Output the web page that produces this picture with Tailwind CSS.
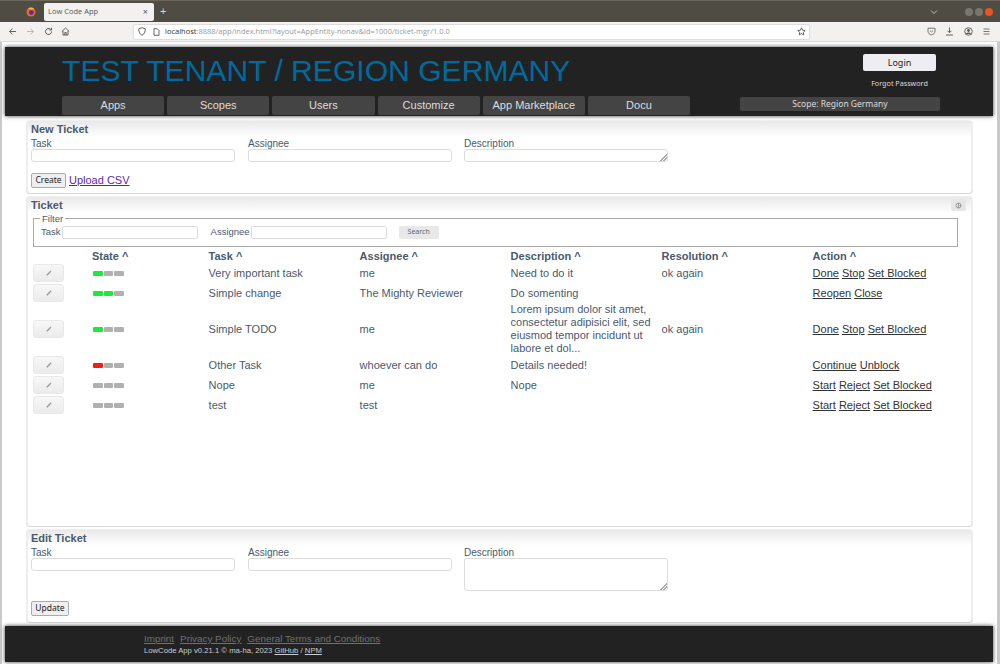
<!DOCTYPE html>
<html lang="en">
<head>
  <title>Low Code App</title>
  <meta charset="UTF-8" />
  <script src="https://cdn.jsdelivr.net/npm/@tailwindcss/browser@4"></script>
</head>
<body class="h-[664px] w-[1000px] overflow-hidden bg-white font-['Liberation_Sans',sans-serif] text-[11px] text-[#4a5a6c]">

  <!-- browser tabs -->
  <div class="flex h-[22px] items-center bg-[#4f4c43] border-t border-[#6a675e]">
    <svg class="ml-[26px] h-[10px] w-[10px]" viewBox="0 0 10 10"><circle cx="5" cy="5" r="4.5" fill="#f0682a"/><circle cx="5.3" cy="5.5" r="2.4" fill="#5a2d9c"/><path d="M2 1.5 Q5 -0.5 8 1.5 L6 3 Z" fill="#f9b52c"/></svg>
    <div class="ml-[8px] flex h-[18px] w-[110px] items-center justify-between rounded-[2px] bg-[#f3f1ef] pl-[4px] pr-[6px] font-['Open_Sans',sans-serif] text-[7.5px] text-[#555]">
      <span>Low Code App</span><span class="text-[9px] leading-none">×</span>
    </div>
    <span class="ml-[6px] text-[11px] leading-none text-[#d8d6d0]">+</span>
    <svg class="ml-auto h-[6px] w-[8px]" viewBox="0 0 8 6"><path d="M1 1.5 L4 4.5 L7 1.5" fill="none" stroke="#c4c2ba" stroke-width="1"/></svg>
    <div class="ml-[27px] flex items-center gap-[2px] pr-[7px]">
      <span class="h-[8px] w-[8px] rounded-full bg-[#78766e]"></span>
      <span class="h-[8px] w-[8px] rounded-full bg-[#78766e]"></span>
      <span class="h-[8px] w-[8px] rounded-full bg-[#e95420]"></span>
    </div>
  </div>

  <!-- browser toolbar -->
  <div class="flex h-[20px] items-center border-b border-[#dcdad7] bg-[#f3f1ef]">
    <svg class="ml-[8px] h-[9px] w-[9px] shrink-0" viewBox="0 0 9 9"><path d="M8 4.5 H1.5 M4.5 1.5 L1.5 4.5 L4.5 7.5" fill="none" stroke="#666" stroke-width="1"/></svg>
    <svg class="ml-[9px] h-[9px] w-[9px] shrink-0" viewBox="0 0 9 9"><path d="M1 4.5 H7.5 M4.5 1.5 L7.5 4.5 L4.5 7.5" fill="none" stroke="#bbb" stroke-width="1"/></svg>
    <svg class="ml-[9px] h-[9px] w-[9px] shrink-0" viewBox="0 0 9 9"><path d="M7.5 4.5 A3 3 0 1 1 6.4 2.2 M7.5 0.8 V3 H5.3" fill="none" stroke="#555" stroke-width="1"/></svg>
    <svg class="ml-[8px] h-[9px] w-[9px] shrink-0" viewBox="0 0 9 9"><path d="M0.8 4.5 L4.5 1 L8.2 4.5 M2 4 V8 H7 V4 M3.8 8 V5.5 H5.2 V8" fill="none" stroke="#555" stroke-width="0.9"/></svg>
    <div class="ml-[63px] flex h-[16px] w-[677px] shrink-0 items-center rounded-[2px] border border-[#dfdddb] bg-white text-[7.5px]">
      <svg class="ml-[4px] h-[9px] w-[8px] shrink-0" viewBox="0 0 8 9"><path d="M4 0.7 L7.3 1.8 C7.3 5 6.2 7.2 4 8.3 C1.8 7.2 0.7 5 0.7 1.8 Z" fill="none" stroke="#555" stroke-width="0.9"/></svg>
      <svg class="ml-[7px] h-[8px] w-[7px] shrink-0" viewBox="0 0 7 8"><path d="M1 0.7 H4.3 L6 2.5 V7.3 H1 Z" fill="none" stroke="#555" stroke-width="0.9"/></svg>
      <span class="ml-[5px] font-['Open_Sans',sans-serif] text-[#999]"><span class="text-[#333]">localhost</span>:8888/app/index.html?layout=AppEntity-nonav&amp;id=1000/ticket-mgr/1.0.0</span>
      <svg class="ml-auto mr-[3px] h-[9px] w-[9px]" viewBox="0 0 9 9"><path d="M4.5 0.8 L5.6 3.2 L8.2 3.5 L6.3 5.3 L6.8 7.9 L4.5 6.6 L2.2 7.9 L2.7 5.3 L0.8 3.5 L3.4 3.2 Z" fill="none" stroke="#555" stroke-width="0.9"/></svg>
    </div>
    <div class="ml-auto flex items-center gap-[9.5px] pr-[9px]">
      <svg class="h-[9px] w-[9px]" viewBox="0 0 9 9"><path d="M1 1.2 H8 V4 C8 6.2 6.4 7.8 4.5 7.8 C2.6 7.8 1 6.2 1 4 Z M3 3.6 L4.5 5 L6 3.6" fill="none" stroke="#666" stroke-width="0.9"/></svg>
      <svg class="h-[9px] w-[9px]" viewBox="0 0 9 9"><path d="M4.5 0.5 V5.5 M2.5 3.7 L4.5 5.7 L6.5 3.7 M1 8 H8" fill="none" stroke="#555" stroke-width="0.9"/></svg>
      <svg class="h-[9px] w-[9px]" viewBox="0 0 9 9"><circle cx="4.5" cy="4.5" r="3.8" fill="none" stroke="#555" stroke-width="0.9"/><circle cx="4.5" cy="3.5" r="1.4" fill="#555"/><path d="M2 7 C2.5 5 6.5 5 7 7 Z" fill="#555"/></svg>
      <svg class="h-[9px] w-[9px]" viewBox="0 0 9 9"><path d="M1.5 2 H7.5 M1.5 4.5 H7.5 M1.5 7 H7.5" fill="none" stroke="#777" stroke-width="1"/></svg>
    </div>
  </div>

  <!-- page -->
  <div class="flex h-[622px] flex-col border-l-2 border-r-[3px] border-[#c9c9c9] bg-white">

    <header class="ml-[3px] mr-[4px] mt-[5px] flex h-[69px] shrink-0 bg-[#222] pl-[57px] pr-[53px] shadow-[0_0_4px_#333]">
      <div class="flex w-[628px] flex-col">
        <h1 class="mt-[4px] h-[40px] whitespace-nowrap text-[30.1px] leading-[40px] text-[#006a9e]">TEST TENANT / REGION GERMANY</h1>
        <nav class="mt-[5px] flex gap-[3px] text-[11px] text-[#ddd]">
          <a class="flex h-[19px] w-[102.2px] items-center justify-center rounded-[2px] bg-[#444]">Apps</a>
          <a class="flex h-[19px] w-[102.2px] items-center justify-center rounded-[2px] bg-[#444]">Scopes</a>
          <a class="flex h-[19px] w-[102.2px] items-center justify-center rounded-[2px] bg-[#444]">Users</a>
          <a class="flex h-[19px] w-[102.2px] items-center justify-center rounded-[2px] bg-[#444]">Customize</a>
          <a class="flex h-[19px] w-[102.2px] items-center justify-center rounded-[2px] bg-[#444]">App Marketplace</a>
          <a class="flex h-[19px] w-[102.2px] items-center justify-center rounded-[2px] bg-[#444]">Docu</a>
        </nav>
      </div>
      <div class="ml-[50px] flex w-[200px] flex-col items-end">
        <button class="mr-[4px] mt-[7px] h-[17px] w-[73px] rounded-[2px] bg-[#eeedf2] font-['Noto_Sans',sans-serif] text-[9px] text-[#222]">Login</button>
        <a class="mr-[4px] mt-[6px] w-[73px] whitespace-nowrap text-center font-['Noto_Sans',sans-serif] text-[7.2px] leading-[12px] text-[#ddd]">Forgot Password</a>
        <div class="mt-[8px] flex h-[14px] w-[200px] items-center justify-center rounded-[2px] bg-[#444] font-['Noto_Sans',sans-serif] text-[8.5px] text-[#ddd]">Scope: Region Germany</div>
      </div>
    </header>

    <main class="ml-[24px] mr-[24px] mt-[4px] flex flex-col gap-[3px]">

      <section class="h-[73px] rounded-[4px] border-x-2 border-t border-[#eeeeee] bg-white shadow-[0_1px_0_#d8d8d8]">
        <h2 class="h-[16px] bg-gradient-to-b from-[#e9e9e9] to-white pl-[3px] text-[11px] font-bold leading-[16px]">New Ticket</h2>
        <div class="flex pl-[3px] text-[10px]">
          <label class="flex w-[217px] flex-col pt-[1px] leading-[11px]">Task<input class="h-[13px] w-[204px] rounded-[3px] border border-[#ddd]" /></label>
          <label class="flex w-[216px] flex-col pt-[1px] leading-[11px]">Assignee<input class="h-[13px] w-[204px] rounded-[3px] border border-[#ddd]" /></label>
          <label class="flex flex-col pt-[1px] leading-[11px]">Description<textarea class="h-[13px] w-[204px] resize-none rounded-[3px] border border-[#ddd] bg-[linear-gradient(135deg,transparent_calc(100%-5px),#aaa_calc(100%-5px),#aaa_calc(100%-4px),transparent_calc(100%-4px),transparent_calc(100%-3px),#aaa_calc(100%-3px),#aaa_calc(100%-2px),transparent_calc(100%-2px))]"></textarea></label>
        </div>
        <div class="mt-[10px] flex items-center gap-[3px] pl-[3px]">
          <button class="h-[15px] w-[35px] rounded-[2px] border border-[#aaa] bg-[#efefef] font-['Noto_Sans',sans-serif] text-[8.5px] text-[#222]">Create</button>
          <a class="text-[#5f1fa8] underline">Upload CSV</a>
        </div>
      </section>

      <section class="h-[330px] rounded-[4px] border-x-2 border-t border-[#eeeeee] bg-white shadow-[0_1px_0_#d8d8d8]">
        <div class="flex h-[16px] items-center justify-between bg-gradient-to-b from-[#e9e9e9] to-white pl-[3px] pr-[5px]">
          <h2 class="text-[11px] font-bold leading-[16px]">Ticket</h2>
          <button class="flex h-[12px] w-[15px] items-center justify-center rounded-[2px] bg-[#e6e6e6]">
            <svg class="h-[7px] w-[7px]" viewBox="0 0 7 7"><path d="M1 3.5 A2.5 2.5 0 0 1 6 3.5 H4.5 M3.5 1 V6 M6 3.5 A2.5 2.5 0 0 1 1 3.5" fill="none" stroke="#888" stroke-width="0.8"/></svg>
          </button>
        </div>
        <fieldset class="ml-[5px] mr-[13px] mt-[1px] h-[33px] border border-[#aaa] pl-[7px]">
          <legend class="ml-[-1px] px-[2px] text-[9.5px] leading-[9px]">Filter</legend>
          <div class="flex h-[19px] items-center text-[9.5px]">
            <span>Task</span>
            <input class="ml-[1px] h-[13px] w-[136px] rounded-[2px] border border-[#ddd]" />
            <span class="ml-[13px]">Assignee</span>
            <input class="ml-[1px] h-[13px] w-[136px] rounded-[2px] border border-[#ddd]" />
            <button class="ml-[12px] h-[13px] w-[40px] rounded-[2px] bg-[#e8e8e8] font-['Noto_Sans',sans-serif] text-[7px] text-[#666]">Search</button>
          </div>
        </fieldset>

        <div class="grid grid-cols-[59px_116.6px_151px_151px_151px_151px_auto] items-center pl-[5px] [&>*]:leading-[13px]">
          <span class="h-[16px]"></span>
          <b class="h-[16px] pt-[3px]">State ^</b><b class="h-[16px] pt-[3px]">Task ^</b><b class="h-[16px] pt-[3px]">Assignee ^</b><b class="h-[16px] pt-[3px]">Description ^</b><b class="h-[16px] pt-[3px]">Resolution ^</b><b class="h-[16px] pt-[3px]">Action ^</b>

          <button class="my-[1px] flex h-[18px] w-[31px] items-center justify-center rounded-[3px] border border-[#e8e8e8] bg-gradient-to-b from-[#f7f7f7] to-[#ebebeb]"><svg class="h-[6px] w-[6px]" viewBox="0 0 6 6"><path d="M0.8 5.2 L5 1" stroke="#999" stroke-width="1.3"/></svg></button>
          <div class="ml-[1px] flex gap-[1.2px]"><i class="h-[5px] w-[9.5px] rounded-[1px] bg-[#1ee83c]"></i><i class="h-[5px] w-[9.5px] rounded-[1px] bg-[#b0b0b0]"></i><i class="h-[5px] w-[9.5px] rounded-[1px] bg-[#b0b0b0]"></i></div>
          <span>Very important task</span><span>me</span><span>Need to do it</span><span>ok again</span>
          <span class="text-[#333]"><a class="underline">Done</a> <a class="underline">Stop</a> <a class="underline">Set Blocked</a></span>

          <button class="my-[1px] flex h-[18px] w-[31px] items-center justify-center rounded-[3px] border border-[#e8e8e8] bg-gradient-to-b from-[#f7f7f7] to-[#ebebeb]"><svg class="h-[6px] w-[6px]" viewBox="0 0 6 6"><path d="M0.8 5.2 L5 1" stroke="#999" stroke-width="1.3"/></svg></button>
          <div class="ml-[1px] flex gap-[1.2px]"><i class="h-[5px] w-[9.5px] rounded-[1px] bg-[#1ee83c]"></i><i class="h-[5px] w-[9.5px] rounded-[1px] bg-[#1ee83c]"></i><i class="h-[5px] w-[9.5px] rounded-[1px] bg-[#b0b0b0]"></i></div>
          <span>Simple change</span><span>The Mighty Reviewer</span><span>Do somenting</span><span></span>
          <span class="text-[#333]"><a class="underline">Reopen</a> <a class="underline">Close</a></span>

          <button class="my-[1px] flex h-[18px] w-[31px] items-center justify-center rounded-[3px] border border-[#e8e8e8] bg-gradient-to-b from-[#f7f7f7] to-[#ebebeb]"><svg class="h-[6px] w-[6px]" viewBox="0 0 6 6"><path d="M0.8 5.2 L5 1" stroke="#999" stroke-width="1.3"/></svg></button>
          <div class="ml-[1px] flex gap-[1.2px]"><i class="h-[5px] w-[9.5px] rounded-[1px] bg-[#1ee83c]"></i><i class="h-[5px] w-[9.5px] rounded-[1px] bg-[#b0b0b0]"></i><i class="h-[5px] w-[9.5px] rounded-[1px] bg-[#b0b0b0]"></i></div>
          <span>Simple TODO</span><span>me</span>
          <span class="w-[146px]">Lorem ipsum dolor sit amet, consectetur adipisici elit, sed eiusmod tempor incidunt ut labore et dol...</span>
          <span>ok again</span>
          <span class="text-[#333]"><a class="underline">Done</a> <a class="underline">Stop</a> <a class="underline">Set Blocked</a></span>

          <button class="my-[1px] flex h-[18px] w-[31px] items-center justify-center rounded-[3px] border border-[#e8e8e8] bg-gradient-to-b from-[#f7f7f7] to-[#ebebeb]"><svg class="h-[6px] w-[6px]" viewBox="0 0 6 6"><path d="M0.8 5.2 L5 1" stroke="#999" stroke-width="1.3"/></svg></button>
          <div class="ml-[1px] flex gap-[1.2px]"><i class="h-[5px] w-[9.5px] rounded-[1px] bg-[#f02010]"></i><i class="h-[5px] w-[9.5px] rounded-[1px] bg-[#b0b0b0]"></i><i class="h-[5px] w-[9.5px] rounded-[1px] bg-[#b0b0b0]"></i></div>
          <span>Other Task</span><span>whoever can do</span><span>Details needed!</span><span></span>
          <span class="text-[#333]"><a class="underline">Continue</a> <a class="underline">Unblock</a></span>

          <button class="my-[1px] flex h-[18px] w-[31px] items-center justify-center rounded-[3px] border border-[#e8e8e8] bg-gradient-to-b from-[#f7f7f7] to-[#ebebeb]"><svg class="h-[6px] w-[6px]" viewBox="0 0 6 6"><path d="M0.8 5.2 L5 1" stroke="#999" stroke-width="1.3"/></svg></button>
          <div class="ml-[1px] flex gap-[1.2px]"><i class="h-[5px] w-[9.5px] rounded-[1px] bg-[#b0b0b0]"></i><i class="h-[5px] w-[9.5px] rounded-[1px] bg-[#b0b0b0]"></i><i class="h-[5px] w-[9.5px] rounded-[1px] bg-[#b0b0b0]"></i></div>
          <span>Nope</span><span>me</span><span>Nope</span><span></span>
          <span class="text-[#333]"><a class="underline">Start</a> <a class="underline">Reject</a> <a class="underline">Set Blocked</a></span>

          <button class="my-[1px] flex h-[18px] w-[31px] items-center justify-center rounded-[3px] border border-[#e8e8e8] bg-gradient-to-b from-[#f7f7f7] to-[#ebebeb]"><svg class="h-[6px] w-[6px]" viewBox="0 0 6 6"><path d="M0.8 5.2 L5 1" stroke="#999" stroke-width="1.3"/></svg></button>
          <div class="ml-[1px] flex gap-[1.2px]"><i class="h-[5px] w-[9.5px] rounded-[1px] bg-[#b0b0b0]"></i><i class="h-[5px] w-[9.5px] rounded-[1px] bg-[#b0b0b0]"></i><i class="h-[5px] w-[9.5px] rounded-[1px] bg-[#b0b0b0]"></i></div>
          <span>test</span><span>test</span><span></span><span></span>
          <span class="text-[#333]"><a class="underline">Start</a> <a class="underline">Reject</a> <a class="underline">Set Blocked</a></span>
        </div>
      </section>

      <section class="h-[93px] rounded-[4px] border-x-2 border-t border-[#eeeeee] bg-white shadow-[0_1px_0_#d8d8d8]">
        <h2 class="h-[16px] bg-gradient-to-b from-[#e9e9e9] to-white pl-[3px] text-[11px] font-bold leading-[16px]">Edit Ticket</h2>
        <div class="flex pl-[3px] text-[10px]">
          <label class="flex w-[217px] flex-col pt-[1px] leading-[11px]">Task<input class="h-[13px] w-[204px] rounded-[3px] border border-[#ddd]" /></label>
          <label class="flex w-[216px] flex-col pt-[1px] leading-[11px]">Assignee<input class="h-[13px] w-[204px] rounded-[3px] border border-[#ddd]" /></label>
          <label class="flex flex-col pt-[1px] leading-[11px]">Description<textarea class="h-[33px] w-[204px] resize-none rounded-[3px] border border-[#ddd] bg-[linear-gradient(135deg,transparent_calc(100%-5px),#aaa_calc(100%-5px),#aaa_calc(100%-4px),transparent_calc(100%-4px),transparent_calc(100%-3px),#aaa_calc(100%-3px),#aaa_calc(100%-2px),transparent_calc(100%-2px))]"></textarea></label>
        </div>
        <button class="ml-[3px] mt-[10px] block h-[15px] w-[38px] rounded-[2px] border border-[#aaa] bg-[#efefef] font-['Noto_Sans',sans-serif] text-[8.5px] text-[#222]">Update</button>
      </section>
    </main>

    <footer class="ml-[3px] mr-[4px] mt-[4px] h-[36px] shrink-0 bg-[#222] pl-[139px] pt-[6px] shadow-[0_0_4px_#333]">
      <p class="flex gap-[6px] text-[9.85px] leading-[13px] text-[#707070] underline"><a>Imprint</a><a>Privacy Policy</a><a>General Terms and Conditions</a></p>
      <p class="text-[7.7px] leading-[11px] text-[#ccc]">LowCode App v0.21.1 © ma-ha, 2023 <a class="underline">GitHub</a> / <a class="underline">NPM</a></p>
    </footer>
  </div>
</body>
</html>
